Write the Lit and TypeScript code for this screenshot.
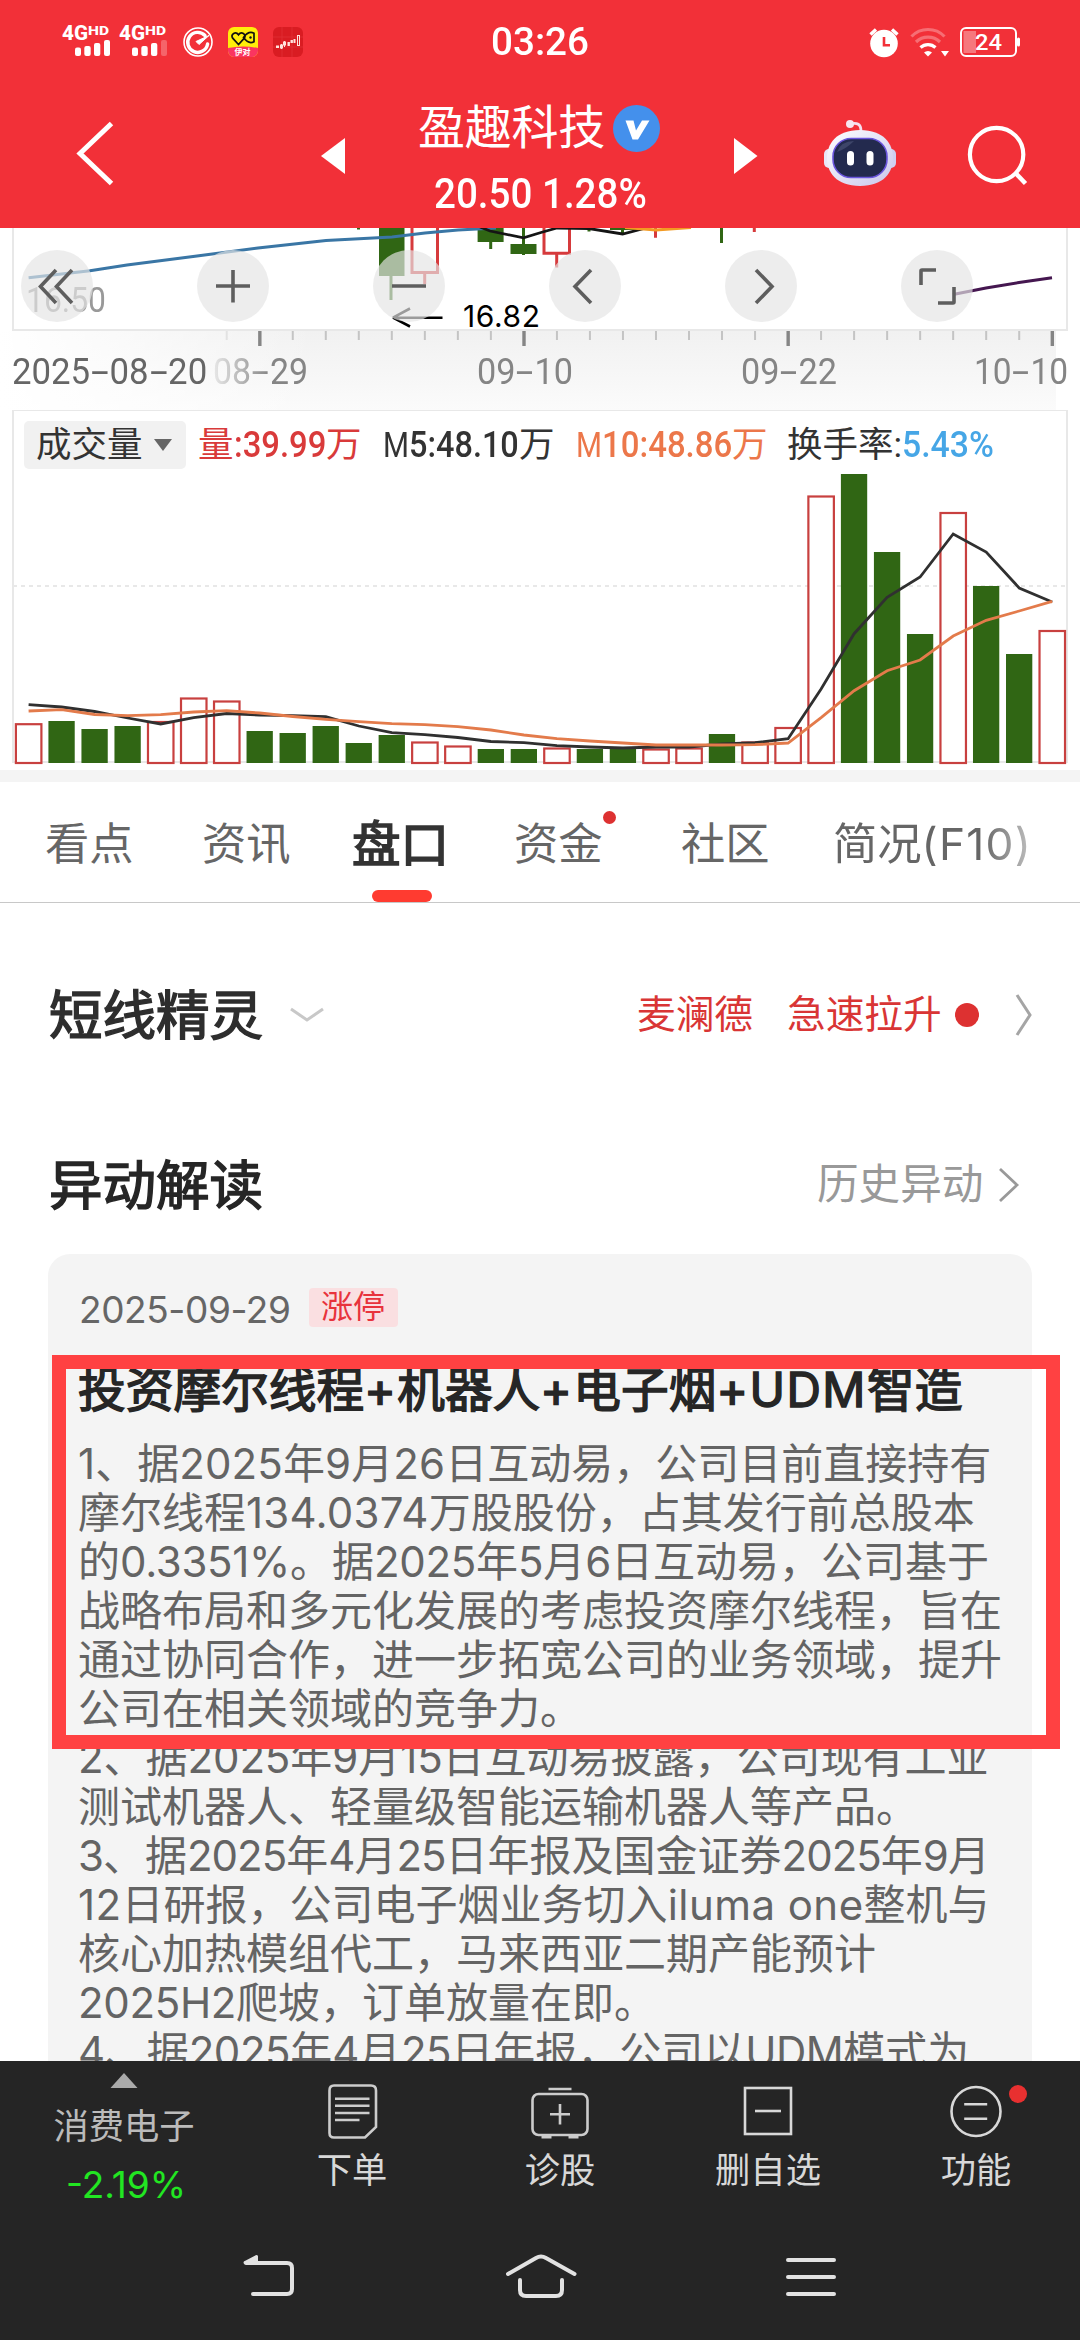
import { LitElement, html, svg, css } from "lit";
import { customElement, property } from "lit/decorators.js";

/** Single line of text set to an exact measure. `stretch` scales the glyphs,
 *  otherwise the tracking of the Latin runs absorbs the difference.
 *  `dash` draws hyphens as wide as a digit. */
@customElement("fit-text")
class FitText extends LitElement {
  @property() text = "";
  @property({ type: Number }) w = 0;
  @property({ type: Boolean }) stretch = false;
  @property({ type: Boolean }) dash = false;

  static styles = css`
    :host { display: block; flex: none; white-space: pre; }
    .run { display: inline-block; transform-origin: 0 50%; }
    .dash { display: inline-block; width: 0.56em; text-align: center; transform: scaleX(1.85); }
  `;

  render() {
    const parts = this.dash
      ? this.text.split(/(-)/)
      : this.text.match(/[\x20-\x7e]+|[^\x20-\x7e]+/g) ?? [];
    return html`<span class="run">${parts.map((p) => html`<span class=${this.dash && p === "-" ? "dash" : /^[\x20-\x7e]/.test(p) ? "latin" : "han"}>${p}</span>`)}</span>`;
  }

  updated() {
    if (!this.w) return;
    this.style.width = `${this.w}px`;
    const run = this.renderRoot.querySelector<HTMLElement>(".run")!;
    const natural = run.offsetWidth;
    if (this.stretch) {
      run.style.transform = `scaleX(${this.w / natural})`;
      return;
    }
    let spans = Array.from(this.renderRoot.querySelectorAll<HTMLElement>(".latin"));
    if (!spans.length) spans = Array.from(this.renderRoot.querySelectorAll<HTMLElement>(".han"));
    const n = spans.reduce((a, s) => a + (s.textContent ?? "").length, 0);
    spans.forEach((s) => (s.style.letterSpacing = `${(this.w - natural) / n}px`));
  }
}

const STEP = 33.02;
const cx = (k: number) => 28.6 + STEP * k;

/* r = hollow rising bar, g = solid falling bar; value is the top edge */
const BARS: [string, number][] = [
  ["r", 723.7], ["g", 721], ["g", 729], ["g", 726], ["r", 721.5], ["r", 698], ["r", 701], ["g", 731],
  ["g", 733], ["g", 726], ["g", 743], ["g", 735], ["r", 742], ["r", 746], ["g", 749], ["g", 749],
  ["r", 748], ["g", 749], ["g", 749], ["r", 749], ["r", 748], ["g", 734], ["r", 742], ["r", 727.5],
  ["r", 496], ["g", 474], ["g", 552], ["g", 634], ["r", 512.5], ["g", 586], ["g", 654], ["r", 630.5],
];
const MA5 = [704.7, 707, 711.5, 718, 724, 717.7, 713.5, 715, 715.7, 716.7, 726, 732.7, 734.7, 737.5, 741.5, 742.7,
  745.7, 747, 748, 747, 747, 744, 742.7, 738.7, 689, 633.7, 597.3, 577, 534, 552, 588, 602];
const MA10 = [711, 709.7, 714.5, 715.7, 714.7, 712, 710.7, 713, 716.5, 719.3, 721.7, 723.7, 724.7, 726.7, 730, 735,
  738.7, 741, 743, 745, 745, 745, 744.7, 743, 717.7, 690.7, 670.7, 660, 636, 620.3, 611, 601.3];
const poly = (ys: number[]) => ys.map((y, k) => `${cx(k).toFixed(1)},${y}`).join(" ");

const BODY: [string, number][] = [
  ["1、据2025年9月26日互动易，公司目前直接持有", 913],
  ["摩尔线程134.0374万股股份，占其发行前总股本", 897],
  ["的0.3351%。据2025年5月6日互动易，公司基于", 911],
  ["战略布局和多元化发展的考虑投资摩尔线程，旨在", 0],
  ["通过协同合作，进一步拓宽公司的业务领域，提升", 0],
  ["公司在相关领域的竞争力。", 0],
  ["2、据2025年9月15日互动易披露，公司现有工业", 911],
  ["测试机器人、轻量级智能运输机器人等产品。", 0],
  ["3、据2025年4月25日年报及国金证券2025年9月", 912],
  ["12日研报，公司电子烟业务切入iluma one整机与", 912],
  ["核心加热模组代工，马来西亚二期产能预计", 0],
  ["2025H2爬坡，订单放量在即。", 578],
  ["4、据2025年4月25日年报，公司以UDM模式为", 891],
];

@customElement("app-root")
class AppRoot extends LitElement {
  static styles = css`
    :host {
      display: block; width: 1080px; height: 2340px; overflow: hidden; background: #fff;
      font-family: Roboto, "Noto Sans CJK SC", sans-serif; color: #666;
    }
    * { box-sizing: border-box; }
    svg { display: block; flex: none; }
    .page { display: flex; flex-direction: column; height: 2340px; }

    .head { height: 228px; flex: none; background: #f23038; color: #fff; }
    .status { display: flex; height: 84px; align-items: center; }
    .clock { font-size: 39px; font-weight: 500; line-height: 84px; margin-left: 179px; }
    .status-r { margin-left: 276px; }
    .bar { display: flex; height: 144px; align-items: flex-start; }
    .prev { margin: 52px 0 0 205px; }
    .next { margin: 52px 0 0 70px; }
    .title { display: flex; flex-direction: column; width: 246px; margin-left: 73px; }
    .name { display: flex; align-items: center; height: 88px; font-size: 47px; line-height: 90px; gap: 8px; }
    .price { font-size: 42px; font-weight: 500; line-height: 44px; margin: 0 0 0 16px; height: 44px; }
    .back { margin: 34px 0 0 71px; }
    .robot { margin: 32px 0 0 61px; }
    .search { margin: 38px 0 0 66px; }

    .kline { position: relative; height: 103px; flex: none; overflow: hidden; }
    .tools { position: absolute; left: 21px; top: 22px; display: flex; gap: 104px; }
    .tool { width: 72px; height: 72px; border-radius: 50%; background: rgba(228, 228, 228, 0.68); }
    .tag-low { position: absolute; left: 463px; top: 74px; font-size: 30px; line-height: 29px; color: #000; font-family: Inter, sans-serif; }
    .tag-grid { position: absolute; left: 26px; top: 50px; font-size: 35px; line-height: 46px; color: #999; }
    .axis { height: 79px; flex: none; margin-right: 24px; background: linear-gradient(90deg, #fff, rgba(255,255,255,0) 30%), linear-gradient(#f1f1f1, #fbfbfb); }
    .ticks { height: 17px; }
    .dates { display: flex; height: 50px; margin-top: -1px; line-height: 50px; font-size: 36px; color: #858585; padding-left: 12px; align-items: center; margin-right: -12px; }
    .first { color: #666; margin-right: 6px; }
    .fade { color: #858585; -webkit-mask-image: linear-gradient(90deg, rgba(0,0,0,.15), #000 60%); mask-image: linear-gradient(90deg, rgba(0,0,0,.15), #000 60%); margin-right: 169px; }
    .mid { margin-right: 168px; }
    .late { margin-right: 137px; }

    .vol { height: 360px; flex: none; position: relative; }
    .vol-plot { position: absolute; left: 0; top: 0; }
    .legend { position: relative; display: flex; align-items: center; height: 48px; padding: 0 0 0 24px; margin-top: 11px; font-size: 35.5px; line-height: 48px; color: #333; }
    .legend .num { font-weight: 500; font-size: 36px; }
    .chip { display: flex; align-items: center; width: 162px; height: 48px; border-radius: 5px; background: #f1f1f1; padding-left: 12px; gap: 10px; }
    .item { display: flex; }
    .c-red { color: #d93a3a; margin-left: 12px; width: 184px; }
    .c-blk { width: 193px; margin-left: 1px; }
    .c-org { color: #ec774a; width: 211px; }
    .c-blu { color: #46a6e6; }
    .band { height: 12px; flex: none; background: #f4f4f4; }

    .tabs { display: grid; grid-template-columns: 157px 150px 162px 167px 152px 220px; height: 121px; flex: none; padding-left: 45px; border-bottom: 1px solid #c8c8c8; font-family: Inter, "Noto Sans CJK SC", sans-serif; font-size: 44.3px; line-height: 125px; color: #666; }
    .tab { position: relative; height: 120px; }
    .tab.on { font-size: 48.5px; -webkit-text-stroke: 1.7px #333; color: #333; line-height: 125px; }
    .tab.on::after { content: ""; position: absolute; left: 20px; bottom: 0; width: 60px; height: 12px; border-radius: 6px; background: #ff3b30; }
    .tab.new::after { content: ""; position: absolute; left: 89px; top: 29px; width: 13px; height: 13px; border-radius: 50%; background: #dd3131; }
    .tab.cut { -webkit-mask-image: linear-gradient(90deg, #000 75%, rgba(0,0,0,.4) 100%); mask-image: linear-gradient(90deg, #000 75%, rgba(0,0,0,.4) 100%); }

    .row { display: flex; align-items: center; flex: none; padding-left: 49px; }
    .row h2 { margin: 0; font-size: 53.5px; line-height: 70px; font-weight: 400; color: #2e2e2e; -webkit-text-stroke: 1.5px #2e2e2e; position: relative; top: 2px; }
    .r1 { height: 70px; margin-top: 77px; }
    .r2 { height: 70px; margin-top: 100px; }
    .row.r2 h2 { color: #262626; -webkit-text-stroke-color: #262626; }
    .down { margin-left: 26px; }
    .hot { display: flex; align-items: center; color: #d93535; font-size: 38.7px; line-height: 68px; margin-left: 312px; }
    .hot .b { margin-left: 34px; }
    .dot { width: 24px; height: 24px; border-radius: 50%; background: #dd3131; margin-left: 13px; }
    .go { margin-left: 36px; }
    .hist { margin-left: 554px; font-size: 41.6px; line-height: 70px; color: #999; }
    .go2 { margin-left: 15px; }

    .card { position: relative; flex: none; height: 807px; margin: 34px 48px 0; border-radius: 22px 22px 0 0; background: #f4f4f4; padding: 34px 0 0 30px; font-family: Inter, "Noto Sans CJK SC", sans-serif; }
    .clip { overflow: hidden; height: 773px; margin-right: -20px; }
    .meta { display: flex; height: 40px; align-items: flex-start; }
    .date { font-size: 37px; line-height: 40px; margin: 2px 0 0 1px; }
    .limit { width: 89px; height: 39px; margin-left: 18px; border-radius: 4px; background: #fadfe1; color: #e8333c; font-size: 32px; line-height: 37px; padding-left: 12px; }
    .subject { margin-top: 32px; height: 60px; font-size: 47.7px; line-height: 61px; -webkit-text-stroke: 1.5px #262626; color: #262626; }
    .text { margin-top: 19px; font-size: 42px; line-height: 49px; color: #646464; }
    .frame { position: absolute; left: 4px; top: 101px; width: 1008px; height: 394px; border: 14px solid #ff4142; }

    .foot { height: 279px; flex: none; background: #252525; color: #d8d8d8; display: flex; flex-direction: column; }
    .acts { display: flex; height: 156px; }
    .act { display: flex; flex-direction: column; align-items: center; font-size: 35.3px; line-height: 44px; width: 208px; position: relative; }
    .act svg { margin-top: 20px; }
    .act .cap { margin-top: 8px; }
    .act.sector { width: 248px; color: #bbb; }
    .act.sector svg { margin-top: 12px; }
    .act.sector .cap { margin-top: 17px; }
    .green { color: #22e622; font-family: Inter, sans-serif; font-size: 37px; margin: 14px 0 0 4px; }
    .badge { position: absolute; left: 137px; top: 24px; width: 18px; height: 18px; border-radius: 50%; background: #e83030; }
    .nav { height: 123px; }
  `;

  private signal(x: number, weak: boolean) {
    return svg`<g transform="translate(${x} 0)" fill="#fff">
      <text x="-1" y="40" font-size="20" font-weight="800" textLength="26" lengthAdjust="spacingAndGlyphs">4G</text>
      <text x="25" y="35" font-size="13" font-weight="800" textLength="21" lengthAdjust="spacingAndGlyphs">HD</text>
      <rect x="12" y="47.5" width="6" height="8.5" rx="2"/><rect x="21.3" y="46" width="6.4" height="10" rx="2"/>
      <rect x="31" y="43" width="6.3" height="13" rx="2"/><rect x="41" y="40" width="6" height="16" rx="2" opacity=${weak ? 0.25 : 1}/></g>`;
  }

  private header() {
    return html`<div class="head">
      <div class="status">
        <svg width="312" height="84" viewBox="0 0 312 84">
          ${this.signal(63, false)}${this.signal(120, true)}
          <circle cx="198" cy="42" r="14" fill="none" stroke="#fff" stroke-width="1.6"/>
          <path d="M205 35.5A10 10 0 1 0 207.6 44" fill="none" stroke="#fff" stroke-width="3.4" stroke-linecap="round"/>
          <path d="M196 41.5L209 35.5L199 44.5Z" fill="#fff" stroke="#fff" stroke-width="1"/>
          <clipPath id="yc"><rect x="228" y="27" width="30" height="30" rx="6"/></clipPath>
          <g clip-path="url(#yc)"><rect x="228" y="27" width="30" height="30" fill="#ffee0a"/><path d="M228 48q15-3 30 0v9h-30z" fill="#fa3560"/></g>
          <path d="M238.5 44.5l-5.8-6.3c-2.4-4 3-7.6 5.8-3.4c2.800-4.200 8.200-.6 5.800 3.400z" fill="none" stroke="#111" stroke-width="1.700"/>
          <path d="M243.500 37.500c4-5.500 8-5.500 10.500-4.200v8.400c-2.500 1.300-6.500 1.300-10.500-4.200z" fill="none" stroke="#111" stroke-width="1.700"/><circle cx="250.500" cy="37.500" r="1.200" fill="#111"/>
          <text x="234.500" y="55.300" font-size="8" font-weight="700" fill="#fff">伊对</text>
          <rect x="273" y="27" width="30" height="30" rx="6" fill="#d91c22"/>
          <path d="M273 37h30M273 47h30M282 27v30M292 27v30" stroke="#e33238" stroke-width=".7"/>
          <g fill="#ffe3dd"><rect x="276" y="45.500" width="3" height="2.500"/><rect x="287.500" y="42" width="2.400" height="4"/><rect x="290.500" y="40" width="2.400" height="3"/><rect x="293.500" y="39" width="2" height="4"/></g>
          <g fill="none" stroke="#ffe3dd" stroke-width="1"><path d="M281.500 44v5M284.500 41v6"/><rect x="280.500" y="45" width="2" height="3"/><rect x="283.500" y="42" width="2" height="3"/><rect x="297.500" y="35.500" width="2" height="10"/></g>
        </svg>
        <fit-text class="clock" text="03:26" w="98" stretch></fit-text>
        <svg class="status-r" width="160" height="84" viewBox="865 0 160 84">
          <circle cx="884" cy="43.500" r="13.800" fill="#fff"/><path d="M870.500 34.500l5.500-5M897.500 34.500l-5.500-5" stroke="#fff" stroke-width="3.400"/>
          <path d="M884 37v8.300h6" fill="none" stroke="#f23038" stroke-width="2.600"/>
          <g fill="none" stroke="#fff" stroke-width="3.200"><path d="M911.500 36.500a23 23 0 0 1 33 0" opacity=".3"/><path d="M916 42a17 17 0 0 1 24 0" opacity=".3"/><path d="M920.500 47.500a11 11 0 0 1 15 0"/></g>
          <path d="M928 56.500l-4-4a6 6 0 0 1 8 0zM941 51h8l-4 5.500z" fill="#fff"/>
          <rect x="961" y="28" width="55" height="28" rx="5" fill="none" stroke="#fff" stroke-width="2"/>
          <rect x="1017" y="37.500" width="3" height="9" rx="1.500" fill="#fff"/><rect x="963.500" y="31" width="12.500" height="22" fill="#fff" opacity=".35"/>
          <text x="975" y="50" font-size="21.500" fill="#fff" font-weight="500" textLength="27" lengthAdjust="spacingAndGlyphs">24</text>
        </svg>
      </div>
      <div class="bar">
        <svg class="back" width="45" height="70" viewBox="71 118 45 70"><path d="M111.500 123.500L80 153.500L111.500 183.500" fill="none" stroke="#fff" stroke-width="5"/></svg>
        <svg class="prev" width="24" height="40" viewBox="321 136 24 40"><path d="M321 156L345 138V174Z" fill="#fff"/></svg>
        <div class="title">
          <div class="name"><fit-text text="盈趣科技" w="187"></fit-text>
            <svg width="47" height="47" viewBox="0 0 47 47"><circle cx="23.500" cy="23.500" r="23.500" fill="#4490ec"/><path d="M12.500 15.500h8l2.500 10L29 15.500h7.500L25 34.500h-5.500Z" fill="#fff"/></svg>
          </div>
          <fit-text class="price" text="20.50 1.28%" w="213" stretch></fit-text>
        </div>
        <svg class="next" width="24" height="40" viewBox="735 136 24 40"><path d="M758.500 156L735 138V174Z" fill="#fff"/></svg>
        <svg class="robot" width="80" height="74" viewBox="820 116 80 74">
          <defs><linearGradient id="rb" x1="0" y1="0" x2="1" y2="1"><stop offset="0" stop-color="#fff"/><stop offset="1" stop-color="#c9c6ec"/></linearGradient></defs>
          <path d="M851 124q11-3 11 7" fill="none" stroke="#f6dfee" stroke-width="2.800"/><circle cx="851" cy="124" r="4" fill="#f7e6f0"/>
          <rect x="825" y="149" width="10" height="19" rx="5" fill="#e9e6f8"/><rect x="887" y="149" width="10" height="19" rx="5" fill="#cfd0f2"/>
          <path d="M861 130c24 0 33 14 33 28s-9 28-33 28s-33-14-33-28s9-28 33-28z" fill="url(#rb)"/>
          <rect x="834" y="138.500" width="54" height="39" rx="18" fill="#232a4e" stroke="#6a55dc" stroke-width="1.600"/>
          <path d="M838 152q4-11 17-11q-8 8-17 11z" fill="#3d4569"/>
          <rect x="848" y="151" width="7" height="14.500" rx="3.500" fill="#fff"/><rect x="867.500" y="151" width="7" height="14.500" rx="3.500" fill="#fff"/>
        </svg>
        <svg class="search" width="64" height="66" viewBox="963 122 64 66"><circle cx="994.600" cy="154.500" r="26.700" fill="none" stroke="#fff" stroke-width="4.200"/><path d="M1013.500 173L1023.500 183.500" stroke="#fff" stroke-width="4.500"/></svg>
      </div>
    </div>`;
  }

  private kline() {
    const tool = (d: string) => html`<div class="tool"><svg width="72" height="72" viewBox="0 0 72 72"><path d=${d} fill="none" stroke="#5e5e5e" stroke-width="3.600"/></svg></div>`;
    return html`<div class="kline">
      <fit-text class="tag-grid" text="16.50" w="80" stretch></fit-text>
      <svg width="1080" height="103" viewBox="0 228 1080 103">
        <path d="M13 228V330H1067V228" fill="none" stroke="#e8e8e8" stroke-width="2"/>
        <g fill="#306614"><rect x="357" y="228" width="3" height="1.500"/><rect x="379" y="228" width="25.500" height="48"/><rect x="389.500" y="275" width="3" height="25"/>
          <rect x="477.600" y="228" width="26" height="14"/><rect x="489.200" y="241" width="3" height="8"/><rect x="522" y="228" width="3" height="27"/><rect x="510.500" y="244" width="26" height="10"/>
          <rect x="587.500" y="228" width="3" height="3.500"/><rect x="610" y="228" width="26" height="2"/><rect x="621" y="228" width="3" height="5"/><rect x="720" y="228" width="3" height="15"/></g>
        <g fill="none" stroke="#d63a3c" stroke-width="3"><path d="M412 220V272.500H437.500V220M424.700 273V284M544 220V253.300H569.500V220M556.700 254V267.500M655.500 228V237.700M754.300 228V232"/></g>
        <polyline points="28.600,277.700 90,270.700 127,265 197,256 258,248 326,240.500 392,237 425,233 458,230 496,228" fill="none" stroke="#3a76a5" stroke-width="3"/>
        <polyline points="480,227 490,231 523.500,237.800 541,232.500 557,228 589,228.500 622.600,234 646,228" fill="none" stroke="#151515" stroke-width="2.800"/>
        <polyline points="625,227.500 656,230 691,227.500" fill="none" stroke="#f39a22" stroke-width="3"/>
        <polyline points="953,294.500 986,288 1019,282.500 1052,277.700" fill="none" stroke="#451750" stroke-width="3"/>
        <path d="M442.500 317.700H393L410 308.500M393 317.700L410 326.500" fill="none" stroke="#000" stroke-width="2.600"/>
      </svg>
      <fit-text class="tag-low" text="16.82" w="78"></fit-text>
      <div class="tools">
        ${tool("M35 20L19.500 36.500L35 53M51 20L35.500 36.500L51 53")}${tool("M36 20V52.500M19 36H53")}${tool("M19 36H53")}
        ${tool("M42 20L26 36.500L42 53")}${tool("M31 20L47 36.500L31 53")}${tool("M20 35V21Q20 20 21 20H35M37 53H52Q53 53 53 52V37")}
      </div>
    </div>
    <div class="axis">
      <svg class="ticks" width="1068" height="17" viewBox="0 331 1068 17">
        ${Array.from({ length: 26 }, (_, i) => {
          const k = i + 6, major = [7, 15, 23, 31].includes(k);
          return svg`<rect x=${cx(k) - (major ? 1.6 : 1)} y="331" width=${major ? 3.4 : 2} height=${major ? 15 : 9} fill=${major ? "#858585" : k === 6 ? "#e2e2e2" : "#c4c4c4"}/>`;
        })}
      </svg>
      <div class="dates">
        <fit-text class="first" text="2025-08-20" w="195" stretch dash></fit-text><fit-text class="fade" text="08-29" w="95" stretch dash></fit-text>
        <fit-text class="mid" text="09-10" w="96" stretch dash></fit-text><fit-text class="late" text="09-22" w="96" stretch dash></fit-text><fit-text text="10-10" w="94" stretch dash></fit-text>
      </div>
    </div>`;
  }

  private volume() {
    return html`<div class="vol">
      <svg class="vol-plot" width="1080" height="360" viewBox="0 410 1080 360">
        <path d="M13 410H1067V762H13Z" fill="none" stroke="#e8e8e8" stroke-width="2"/>
        <path d="M13 586H1066" stroke="#e8e8e8" stroke-width="2" stroke-dasharray="4 4"/>
        ${BARS.map(([t, y], k) => t === "g"
          ? svg`<rect x=${cx(k) - 13.2} y=${y} width="26.300" height=${763 - y} fill="#306614"/>`
          : svg`<rect x=${cx(k) - 12.7} y=${y + 0.5} width="25.500" height=${762.5 - y} fill="#fff" stroke="#c8403f" stroke-width="2.200"/>`)}
        <polyline points=${poly(MA5)} fill="none" stroke="#303030" stroke-width="2.800"/>
        <polyline points=${poly(MA10)} fill="none" stroke="#e37b4b" stroke-width="2.800"/>
      </svg>
      <div class="legend">
        <div class="chip"><fit-text text="成交量" w="107"></fit-text><svg width="20" height="14" viewBox="0 0 20 14"><path d="M1 1H19L10 13Z" fill="#666"/></svg></div>
        <div class="item c-red"><fit-text text="量" w="36"></fit-text><fit-text class="num" text=":39.99" w="92" stretch></fit-text>万</div>
        <div class="item c-blk"><fit-text text="M" w="26" stretch></fit-text><fit-text class="num" text="5:48.10" w="110" stretch></fit-text>万</div>
        <div class="item c-org"><fit-text text="M" w="26" stretch></fit-text><fit-text class="num" text="10:48.86" w="130" stretch></fit-text>万</div>
        <div class="item">换手率:</div><fit-text class="num c-blu" text="5.43%" w="92" stretch></fit-text>
      </div>
    </div>
    <div class="band"></div>`;
  }

  render() {
    return html`<div class="page">
      ${this.header()}${this.kline()}${this.volume()}
      <div class="tabs">
        <div class="tab">看点</div><div class="tab">资讯</div><div class="tab on">盘口</div><div class="tab new">资金</div><div class="tab">社区</div>
        <fit-text class="tab cut" text="简况(F10)" w="199"></fit-text>
      </div>
      <div class="row r1"><h2>短线精灵</h2>
        <svg class="down" width="36" height="16" viewBox="0 0 36 16"><path d="M2 2L18 13L34 2" fill="none" stroke="#c8c8c8" stroke-width="3"/></svg>
        <div class="hot"><fit-text text="麦澜德" w="116"></fit-text><fit-text class="b" text="急速拉升" w="155"></fit-text><i class="dot"></i></div>
        <svg class="go" width="18" height="44" viewBox="0 0 18 44"><path d="M2 2L15 22L2 42" fill="none" stroke="#a5a5a5" stroke-width="3"/></svg>
      </div>
      <div class="row r2"><h2>异动解读</h2><div class="hist">历史异动</div>
        <svg class="go2" width="22" height="36" viewBox="0 0 22 36"><path d="M2 2L19 18L2 34" fill="none" stroke="#999" stroke-width="2.800"/></svg>
      </div>
      <div class="card">
        <div class="clip">
          <div class="meta"><fit-text class="date" text="2025-09-29" w="212"></fit-text><span class="limit">涨停</span></div>
          <fit-text class="subject" text="投资摩尔线程+机器人+电子烟+UDM智造" w="884"></fit-text>
          <div class="text">${BODY.map(([t, w]) => html`<fit-text text=${t} w=${w}></fit-text>`)}</div>
        </div>
        <div class="frame"></div>
      </div>
      <div class="foot">
        <div class="acts">
          <div class="act sector"><svg width="28" height="15" viewBox="0 0 28 15"><path d="M14 0L27.500 15H.5Z" fill="#aaa"/></svg>
            <span class="cap">消费电子</span><fit-text class="green" text="-2.19%" w="120"></fit-text></div>
          <div class="act"><svg width="52" height="60" viewBox="326 2081 52 60"><g fill="none" stroke="#ccc" stroke-width="2.600"><path d="M334 2085.500H371Q376 2085.500 376 2090.500V2127L365 2137.500H334Q329.500 2137.500 329.500 2133V2090.500Q329.500 2085.500 334 2085.500Z"/><path d="M335 2098.700H369.500M335 2105.800H369.500M335 2113H369.500M335 2120H359.500"/></g></svg><span class="cap">下单</span></div>
          <div class="act"><svg width="60" height="60" viewBox="529.500 2081 60 60"><g fill="none" stroke="#ccc" stroke-width="2.600"><rect x="532" y="2094" width="55" height="41" rx="6"/><path d="M548 2089H571M559.500 2104V2124.500M549.500 2114.200H569.500M541 2137.300H551M568 2137.300H578"/></g></svg><span class="cap">诊股</span></div>
          <div class="act"><svg width="52" height="60" viewBox="741 2081 52 60"><g fill="none" stroke="#d8d8d8" stroke-width="2.600"><rect x="744" y="2088" width="46" height="46"/><path d="M754 2111H780"/></g></svg><span class="cap">删自选</span></div>
          <div class="act"><svg width="56" height="60" viewBox="947.600 2081 56 60"><g fill="none" stroke="#d8d8d8" stroke-width="2.600"><circle cx="975.600" cy="2111.500" r="24.500"/><path d="M963.800 2104.200H986.800M963.800 2118.700H986.800"/></g></svg><span class="cap">功能</span><i class="badge"></i></div>
        </div>
        <svg class="nav" width="1080" height="123" viewBox="0 2217 1080 123"><g fill="none" stroke="#e2e2e2" stroke-width="4" stroke-linecap="round" stroke-linejoin="round">
          <path d="M246 2263H287Q292 2263 292 2268V2289Q292 2294 287 2294H253"/><path d="M245 2262.500L256.500 2256.500V2262.500Z" fill="#e2e2e2" stroke-width="3"/>
          <path d="M508 2274L536 2258Q541 2255 546 2258L574.500 2274"/><path d="M520 2280V2290Q520 2296 526 2296H556Q562 2296 562 2290V2280"/>
          <path d="M788 2260H834M788 2277H834M788 2294H834"/></g></svg>
      </div>
    </div>`;
  }
}
